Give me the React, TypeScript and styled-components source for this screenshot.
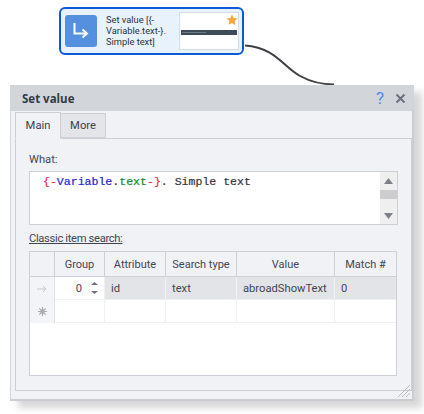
import React from 'react';
import styled, { createGlobalStyle } from 'styled-components';

const GlobalStyle = createGlobalStyle`
  html, body {
    margin: 0;
    padding: 0;
    background: #fff;
  }
`;

const Page = styled.div`
  position: relative;
  width: 424px;
  height: 414px;
  overflow: hidden;
  background: #fff;
  font-family: Roboto, 'Liberation Sans', sans-serif;
  color: #3a3f4a;
`;

const Node = styled.div`
  box-sizing: border-box;
  display: flex;
  width: 185px;
  height: 48px;
  margin: 7px 0 0 59px;
  padding: 3px 3px 3px 4px;
  border: 2px solid #0b5bd9;
  border-radius: 6px;
  background: #e8f2fd;
`;

const NodeIcon = styled.div`
  display: flex;
  flex: none;
  align-items: center;
  justify-content: center;
  width: 32px;
  height: 32px;
  margin-top: 3px;
  border-radius: 3px;
  background: #5590de;
`;

const NodeLabel = styled.div`
  flex: none;
  width: 73px;
  margin: 2px 0 0 9px;
  font-size: 9.3px;
  line-height: 11px;
  color: #2b3340;
`;

const Preview = styled.div`
  position: relative;
  flex: none;
  display: flex;
  align-items: center;
  box-sizing: border-box;
  width: 60px;
  height: 38px;
  padding: 2px 1px 0;
  border: 1px solid #d5dce6;
  background: #fff;
`;

const PreviewBar = styled.div`
  display: flex;
  align-items: center;
  width: 100%;
  height: 5px;
  padding-left: 1px;
  background: #3d4a57;
`;

const PreviewBarText = styled.div`
  width: 24px;
  height: 1px;
  background: #6c7884;
`;

const PreviewStar = styled.svg`
  position: absolute;
  top: 1px;
  right: 0;
`;

const Curve = styled.svg`
  position: absolute;
  top: 0;
  left: 0;
`;

const Window = styled.div`
  position: relative;
  box-sizing: border-box;
  display: flex;
  flex-direction: column;
  width: 404px;
  height: 316px;
  margin: 30px 0 0 10px;
  border-right: 2px solid #c9ccd1;
  border-bottom: 2px solid #c9ccd1;
  border-left: 1px solid #d2d5d9;
  background: #f0f2f6;
  box-shadow: 8px 7px 7px rgba(0, 0, 0, 0.16);
`;

const TitleBar = styled.div`
  display: flex;
  flex: none;
  align-items: center;
  height: 26px;
  margin-left: -1px;
  margin-right: -2px;
  padding: 0 8px 0 12px;
  background: #d2d5d9;
`;

const Title = styled.div`
  flex: 1;
  font-family: 'Open Sans', sans-serif;
  font-size: 11.5px;
  font-weight: 700;
  color: #333b47;
`;

const HelpMark = styled.span`
  margin-right: 11px;
  font-size: 17px;
  line-height: 1;
  color: #4d8bea;
`;

const Tabs = styled.div`
  display: flex;
  flex: none;
  align-items: flex-end;
  height: 28px;
  margin: 0 0 -1px 4px;
`;

const Tab = styled.div<{ $active?: boolean }>`
  position: relative;
  z-index: 1;
  box-sizing: border-box;
  display: flex;
  align-items: center;
  justify-content: center;
  width: ${(p) => (p.$active ? '46px' : '45px')};
  height: ${(p) => (p.$active ? '27px' : '25px')};
  margin-bottom: ${(p) => (p.$active ? '0' : '1px')};
  border: 1px solid #ccd0d6;
  border-bottom: ${(p) => (p.$active ? '1px solid #f0f2f6' : '1px solid #ccd0d6')};
  border-left: ${(p) => (p.$active ? '1px solid #ccd0d6' : 'none')};
  background: ${(p) => (p.$active ? '#f0f2f6' : '#e3e5e9')};
  font-size: 11.2px;
  color: #3a4250;
`;

const Panel = styled.div`
  box-sizing: border-box;
  flex: none;
  width: 397px;
  height: 253px;
  margin-left: 4px;
  padding: 13px 13px 0 13px;
  border: 1px solid #ccd0d6;
`;

const FieldLabel = styled.div<{ $underline?: boolean }>`
  height: 16px;
  font-size: 11.2px;
  line-height: 16px;
  color: #3f4653;
  text-decoration: ${(p) => (p.$underline ? 'underline' : 'none')};
  letter-spacing: ${(p) => (p.$underline ? '-0.33px' : '0')};
`;

const TextBox = styled.div`
  box-sizing: border-box;
  display: flex;
  width: 369px;
  height: 54px;
  margin: 3px 0 6px;
  border: 1px solid #ccd0d6;
  background: #fff;
`;

const Code = styled.div`
  flex: 1;
  padding: 3px 0 0 13px;
  font-family: 'Liberation Mono', monospace;
  font-size: 11.55px;
  line-height: 14px;
  white-space: pre;
  color: #333;
  -webkit-text-stroke: 0.2px currentColor;
`;

const CodeToken = styled.span<{ $color: string }>`
  color: ${(p) => p.$color};
`;

const ScrollBar = styled.div`
  display: flex;
  flex: none;
  flex-direction: column;
  align-items: center;
  width: 17px;
  background: #efefef;
`;

const ScrollArrow = styled.svg<{ $top: number }>`
  margin-top: ${(p) => p.$top}px;
`;

const ScrollThumb = styled.div`
  width: 100%;
  height: 9px;
  margin-top: 6px;
  background: #cdcdcf;
`;

const Grid = styled.div`
  box-sizing: border-box;
  display: grid;
  grid-template-columns: 25px 50px 61px 71px 98px 1fr;
  grid-auto-rows: min-content;
  width: 368px;
  height: 125px;
  margin-top: 4px;
  border: 1px solid #ccd0d6;
  background: #fff;
`;

const HeadCell = styled.div`
  box-sizing: border-box;
  display: flex;
  align-items: center;
  justify-content: center;
  height: 25px;
  padding-top: 1px;
  border-right: 1px solid #ccd0d6;
  border-bottom: 1px solid #ccd0d6;
  background: #f0f2f6;
  font-size: 11px;
  color: #3f4653;
  &:nth-child(6) {
    border-right: none;
  }
`;

const Cell = styled.div<{ $selected?: boolean; $end?: boolean }>`
  box-sizing: border-box;
  display: flex;
  align-items: center;
  height: 23px;
  padding: 1px 0 0 6px;
  border-right: ${(p) => (p.$end ? 'none' : `1px solid ${p.$selected ? '#f0f2f6' : '#eef0f2'}`)};
  border-bottom: 1px solid #eef0f2;
  background: ${(p) => (p.$selected ? '#e2e4e7' : '#fff')};
  font-size: 11.2px;
  color: #3f4653;
`;

const IndicatorCell = styled.div`
  box-sizing: border-box;
  display: flex;
  align-items: center;
  justify-content: center;
  height: 23px;
  border-right: 1px solid #dfe2e6;
  background: #f3f4f7;
`;

const SpinCell = styled.div`
  box-sizing: border-box;
  display: flex;
  align-items: center;
  justify-content: flex-end;
  gap: 9px;
  height: 23px;
  padding-right: 6px;
  border-right: 1px solid #eef0f2;
  border-bottom: 1px solid #eef0f2;
  background: #fff;
  font-size: 11.2px;
  color: #3f4653;
`;

const Grip = styled.svg`
  position: absolute;
  right: 1px;
  bottom: 1px;
`;

const Arrow = ({ up, top }: { up?: boolean; top: number }) => (
  <ScrollArrow $top={top} width="9" height="6" viewBox="0 0 9 6">
    <path d={up ? 'M4.5 0L9 6H0z' : 'M0 0h9L4.5 6z'} fill="#7d8087" />
  </ScrollArrow>
);

const App = () => (
  <Page>
    <GlobalStyle />
    <Curve width="424" height="90" viewBox="0 0 424 90">
      <path d="M245 45.5C276 48 282 66 300 76C312 82.5 322 84.5 334 84.5" fill="none" stroke="#3f4145" strokeWidth="2" />
    </Curve>
    <Node>
      <NodeIcon>
        <svg width="18" height="18" viewBox="0 0 18 18" fill="none" stroke="#fff" strokeWidth="2">
          <path d="M2.5 1v10.5h12" />
          <path d="M10.5 7.5l4.5 4-4.5 4" />
        </svg>
      </NodeIcon>
      <NodeLabel>Set value [{'{'}-Variable.text-{'}'}. Simple text]</NodeLabel>
      <Preview>
        <PreviewBar>
          <PreviewBarText />
        </PreviewBar>
        <PreviewStar width="12" height="12" viewBox="0 0 24 24">
          <path d="M12 1l3.4 7.2 7.6 1-5.6 5.4 1.4 7.8L12 18l-6.8 3.4 1.4-7.8L1 9.2l7.6-1z" fill="#f6a83c" />
        </PreviewStar>
      </Preview>
    </Node>
    <Window>
      <TitleBar>
        <Title>Set value</Title>
        <HelpMark>?</HelpMark>
        <svg width="11" height="11" viewBox="0 0 11 11" stroke="#6d7280" strokeWidth="2">
          <path d="M1.5 1.5l8 8M9.5 1.5l-8 8" />
        </svg>
      </TitleBar>
      <Tabs>
        <Tab $active>Main</Tab>
        <Tab>More</Tab>
      </Tabs>
      <Panel>
        <FieldLabel>What:</FieldLabel>
        <TextBox>
          <Code>
            <CodeToken $color="#f0213a">{'{-'}</CodeToken>
            <CodeToken $color="#1b1bd8">Variable</CodeToken>
            <CodeToken $color="#333">.</CodeToken>
            <CodeToken $color="#0b8a2c">text</CodeToken>
            <CodeToken $color="#f0213a">{'-}'}</CodeToken>
            . Simple text
          </Code>
          <ScrollBar>
            <Arrow up top={6} />
            <ScrollThumb />
            <Arrow top={14} />
          </ScrollBar>
        </TextBox>
        <FieldLabel $underline>Classic item search:</FieldLabel>
        <Grid>
          <HeadCell />
          <HeadCell>Group</HeadCell>
          <HeadCell>Attribute</HeadCell>
          <HeadCell>Search type</HeadCell>
          <HeadCell>Value</HeadCell>
          <HeadCell>Match #</HeadCell>

          <IndicatorCell>
            <svg width="10" height="8" viewBox="0 0 10 8" fill="none" stroke="#c6c9ce">
              <path d="M0 4h9M6 1l3 3-3 3" />
            </svg>
          </IndicatorCell>
          <SpinCell>
            0
            <svg width="7" height="14" viewBox="0 0 7 14" fill="#6f737b">
              <path d="M3.5 1L7 4H0zM0 10h7l-3.5 3z" />
            </svg>
          </SpinCell>
          <Cell $selected>id</Cell>
          <Cell $selected>text</Cell>
          <Cell $selected>abroadShowText</Cell>
          <Cell $selected $end>0</Cell>

          <IndicatorCell>
            <svg width="9" height="9" viewBox="0 0 9 9" stroke="#a9abb0" strokeWidth="1.2">
              <path d="M4.5 0v9M0 4.5h9M1.3 1.3l6.4 6.4M7.7 1.3L1.3 7.7" />
              <circle cx="4.5" cy="4.5" r="2.2" fill="#a9abb0" stroke="none" />
            </svg>
          </IndicatorCell>
          <Cell />
          <Cell />
          <Cell />
          <Cell />
          <Cell $end />
        </Grid>
      </Panel>
      <Grip width="14" height="14" viewBox="0 0 14 14" stroke="#b9bcc2">
        <path d="M1 13L13 1M5 13l8-8M9 13l4-4" />
      </Grip>
    </Window>
  </Page>
);

export default App;
